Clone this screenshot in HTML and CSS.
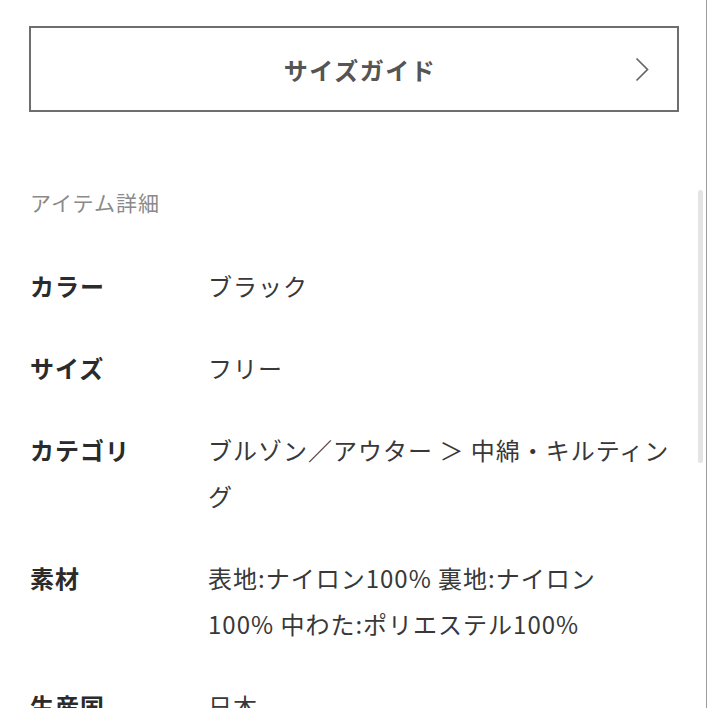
FILE: index.html
```html
<!DOCTYPE html>
<html lang="ja">
<head>
<meta charset="utf-8">
<link rel="stylesheet" href="styles.css">
</head>
<body>
<div class="page">
  <a class="guide">
    <span class="guide-spacer"></span>
    <span class="guide-label">サイズガイド</span>
    <svg class="guide-chevron" width="14" height="25" viewBox="0 0 14 25"><path d="M1.5 1.5 L12.5 12.5 L1.5 23.5" fill="none" stroke="#666" stroke-width="1.7"/></svg>
  </a>
  <h2 class="heading">アイテム詳細</h2>
  <dl class="specs">
    <div class="row"><dt>カラー</dt><dd>ブラック</dd></div>
    <div class="row"><dt>サイズ</dt><dd>フリー</dd></div>
    <div class="row"><dt>カテゴリ</dt><dd>ブルゾン／アウター ＞ 中綿・キルティング</dd></div>
    <div class="row"><dt>素材</dt><dd>表地:ナイロン100%&nbsp;裏地:ナイロン100%&nbsp;中わた:ポリエステル100%</dd></div>
    <div class="row"><dt>生産国</dt><dd>日本</dd></div>
  </dl>
  <div class="scroll-thumb"></div>
</div>
</body>
</html>
```
FILE: styles.css
```css
html, body {
  margin: 0;
  padding: 0;
  background: #fff;
}
body {
  font-family: "Noto Sans CJK JP", "Noto Sans", sans-serif;
  color: #333;
}
.page {
  position: relative;
  width: 707px;
  height: 708px;
  box-sizing: border-box;
  border-right: 1px solid #9c9c9c;
  padding: 26px 27px 0 29px;
  overflow: hidden;
}
.guide {
  display: grid;
  grid-template-columns: 1fr auto 1fr;
  align-items: center;
  height: 86px;
  box-sizing: border-box;
  border: 2px solid #6e6e6e;
  color: #555;
  text-decoration: none;
}
.guide-label {
  font-size: 24px;
  font-weight: 700;
  letter-spacing: 1.5px;
  padding-left: 12px;
}
.guide-chevron {
  justify-self: end;
  margin-right: 28px;
}
.heading {
  margin: 75px 0 0 1px;
  font-size: 21px;
  line-height: 30px;
  font-weight: 400;
  letter-spacing: 1px;
  color: #8a8a8a;
}
.specs {
  margin: 28px 0 0 0;
  padding: 0;
}
.row {
  display: grid;
  grid-template-columns: 179px 1fr;
  padding: 18px 0;
  font-size: 24px;
  line-height: 46px;
  letter-spacing: 1px;
}
.row dt {
  font-weight: 700;
  color: #2b2b2b;
  padding-left: 1px;
}
.row dd {
  margin: 0;
  color: #383838;
}
.scroll-thumb {
  position: absolute;
  left: 698px;
  top: 190px;
  width: 5px;
  height: 273px;
  border-radius: 3px;
  background: #e4e4e4;
}
```
